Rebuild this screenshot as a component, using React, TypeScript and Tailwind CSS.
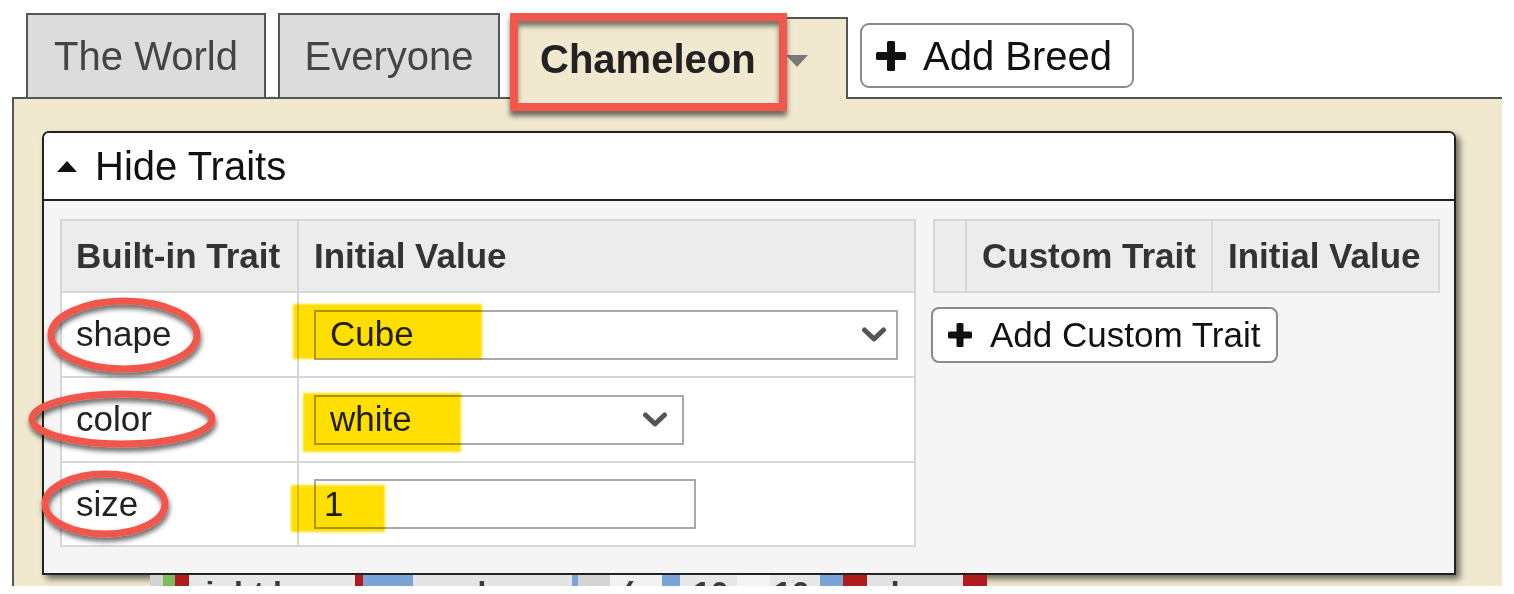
import React from "react";

function Plus({ size, bar }: { size: number; bar: number }) {
  const o = (size - bar) / 2;
  return (
    <svg width={size} height={size} viewBox={`0 0 ${size} ${size}`} className="shrink-0">
      <rect x={o} y={0} width={bar} height={size} rx={1.5} fill="#111" />
      <rect x={0} y={o} width={size} height={bar} rx={1.5} fill="#111" />
    </svg>
  );
}

function Chevron() {
  return (
    <svg width="26" height="18" viewBox="0 0 26 18" className="shrink-0">
      <polyline
        points="3.5,4 13,13 22.5,4"
        fill="none"
        stroke="#555"
        strokeWidth="5"
        strokeLinecap="round"
        strokeLinejoin="round"
      />
    </svg>
  );
}

const strip: { w: number; bg: string; t?: string }[] = [
  { w: 13, bg: "#d2d2d2" },
  { w: 12, bg: "#7dbb5e" },
  { w: 14, bg: "#b01c1c" },
  { w: 166, bg: "#e8e8e8", t: "right by" },
  { w: 8, bg: "#b01c1c" },
  { w: 50, bg: "#7aa3d6" },
  { w: 159, bg: "#e4e4e4", t: "random" },
  { w: 6, bg: "#7aa3d6" },
  { w: 32, bg: "#d4d4d4" },
  { w: 52, bg: "#f2f2f2", t: " (" },
  { w: 18, bg: "#7aa3d6" },
  { w: 57, bg: "#e8e8e8", t: " 10" },
  { w: 33, bg: "#f4f4f4" },
  { w: 50, bg: "#e8e8e8", t: "10" },
  { w: 23, bg: "#7aa3d6" },
  { w: 24, bg: "#b01c1c" },
  { w: 96, bg: "#e2e2e2", t: " done" },
  { w: 24, bg: "#b01c1c" },
];

export default function App() {
  return (
    <div className="relative w-[1514px] h-[594px] overflow-hidden bg-white font-['Liberation_Sans',Arial,sans-serif] text-[#222]">
      {/* Tabs row */}
      <div className="flex items-end h-[97px] pl-[26px]">
        <div className="h-[84px] w-[240px] flex items-center justify-center bg-[#dcdcdc] border-2 border-b-0 border-[#555] text-[40px] text-[#444]">
          The World
        </div>
        <div className="ml-[12px] h-[84px] w-[222px] flex items-center justify-center bg-[#dcdcdc] border-2 border-b-0 border-[#555] text-[40px] text-[#444]">
          Everyone
        </div>
        <div className="relative z-10 ml-[12px] mb-[-2px] h-[82px] w-[336px] flex items-center bg-[#f0e9cf] border-2 border-b-0 border-[#555] pl-[26px]">
          <span className="text-[40px] font-bold text-[#222]">Chameleon</span>
          <svg width="22" height="12" viewBox="0 0 22 12" className="ml-[30px] mt-[4px]">
            <polygon points="0,0 22,0 11,12" fill="#7a7a7a" />
          </svg>
        </div>
        <button className="ml-[12px] mb-[9px] h-[65px] w-[274px] flex items-center pl-[14px] bg-white border-2 border-[#8a8a8a] rounded-[9px]">
          <Plus size={30} bar={8} />
          <span className="ml-[17px] text-[40px] text-[#111]">Add Breed</span>
        </button>
      </div>

      {/* Panel */}
      <div className="ml-[12px] w-[1490px] h-[489px] border-t-2 border-l-2 border-[#555] bg-[#f0e9cf] pt-[32px] pl-[28px]">
        <div className="w-[1414px] h-[444px] border-2 border-[#222] rounded-t-[7px] bg-[#f5f5f5] shadow-[4px_4px_6px_rgba(0,0,0,0.55)] flex flex-col">
          <div className="h-[68px] shrink-0 border-b-2 border-[#222] bg-white rounded-t-[5px] flex items-center pl-[13px]">
            <svg width="20" height="11" viewBox="0 0 20 11">
              <polygon points="10,0 20,11 0,11" fill="#111" />
            </svg>
            <span className="ml-[18px] text-[40px] text-[#111]">Hide Traits</span>
          </div>
          <div className="flex items-start pt-[18px] pl-[16px]">
            {/* Built-in table */}
            <div className="w-[856px] border-2 border-[#d6d6d6] bg-white">
              <div className="h-[72px] flex border-b-2 border-[#d6d6d6] bg-[#ececec] text-[35px] font-bold text-[#333]">
                <div className="w-[237px] border-r-2 border-[#d6d6d6] flex items-center pl-[14px]">Built-in Trait</div>
                <div className="flex-1 flex items-center pl-[15px]">Initial Value</div>
              </div>
              <div className="h-[85px] flex border-b-2 border-[#d6d6d6] text-[35px]">
                <div className="w-[237px] border-r-2 border-[#d6d6d6] flex items-center pl-[14px]">shape</div>
                <div className="flex-1 flex items-center pl-[15px]">
                  <div className="w-[584px] h-[50px] border-2 border-[#a9a9a9] bg-white flex items-center justify-between pl-[14px] pr-[9px]">
                    <span>Cube</span>
                    <Chevron />
                  </div>
                </div>
              </div>
              <div className="h-[85px] flex border-b-2 border-[#d6d6d6] text-[35px]">
                <div className="w-[237px] border-r-2 border-[#d6d6d6] flex items-center pl-[14px]">color</div>
                <div className="flex-1 flex items-center pl-[15px]">
                  <div className="w-[370px] h-[50px] border-2 border-[#a9a9a9] bg-white flex items-center justify-between pl-[14px] pr-[14px]">
                    <span>white</span>
                    <Chevron />
                  </div>
                </div>
              </div>
              <div className="h-[82px] flex text-[35px]">
                <div className="w-[237px] border-r-2 border-[#d6d6d6] flex items-center pl-[14px]">size</div>
                <div className="flex-1 flex items-center pl-[15px]">
                  <div className="w-[382px] h-[50px] border-2 border-[#a9a9a9] bg-white flex items-center pl-[8px]">
                    <span>1</span>
                  </div>
                </div>
              </div>
            </div>

            {/* Custom table */}
            <div className="ml-[17px] flex flex-col">
              <div className="w-[507px] h-[74px] border-2 border-[#d6d6d6] bg-[#ececec] flex text-[35px] font-bold text-[#333]">
                <div className="w-[32px] border-r-2 border-[#d6d6d6]" />
                <div className="w-[246px] border-r-2 border-[#d6d6d6] flex items-center pl-[15px]">Custom Trait</div>
                <div className="flex-1 flex items-center pl-[15px]">Initial Value</div>
              </div>
              <button className="mt-[14px] ml-[-2px] w-[347px] h-[56px] flex items-center pl-[15px] bg-white border-2 border-[#8a8a8a] rounded-[8px]">
                <Plus size={24} bar={7} />
                <span className="ml-[18px] text-[35px] text-[#111]">Add Custom Trait</span>
              </button>
            </div>
          </div>
        </div>

        {/* clipped blocks strip below */}
        <div className="ml-[108px] h-[11px] overflow-hidden flex">
          {strip.map((s, i) => (
            <div
              key={i}
              className="h-[11px] overflow-hidden shrink-0 whitespace-pre"
              style={{ width: s.w, background: s.bg }}
            >
              {s.t ? (
                <span className="block text-[32px] leading-none font-bold text-[#3a3a3a] mt-[2px] pl-[4px]">{s.t}</span>
              ) : null}
            </div>
          ))}
        </div>
      </div>

      {/* Annotation: red box on active tab */}
      <div className="absolute left-[510px] top-[13px] w-[277px] h-[98px] border-[8px] border-[#f2574b] shadow-[0_5px_5px_rgba(0,0,0,0.55),inset_0_5px_5px_rgba(0,0,0,0.5)] pointer-events-none z-20" />

      {/* Annotation: yellow highlights */}
      <div className="absolute left-[293px] top-[304px] w-[189px] h-[55px] bg-[#ffdf00] mix-blend-multiply blur-[1px] pointer-events-none z-20" />
      <div className="absolute left-[303px] top-[393px] w-[158px] h-[59px] bg-[#ffdf00] mix-blend-multiply blur-[1px] pointer-events-none z-20" />
      <div className="absolute left-[291px] top-[485px] w-[94px] h-[47px] bg-[#ffdf00] mix-blend-multiply blur-[1px] pointer-events-none z-20" />

      {/* Annotation: red ellipses */}
      <svg className="absolute left-0 top-0 pointer-events-none z-20" width="1514" height="594" viewBox="0 0 1514 594">
        <defs>
          <filter id="sh" x="-20%" y="-40%" width="140%" height="180%">
            <feDropShadow dx="1" dy="4" stdDeviation="2.5" floodColor="#000" floodOpacity="0.6" />
          </filter>
        </defs>
        <g fill="none" stroke="#f2574b" strokeWidth="7" filter="url(#sh)">
          <ellipse cx="124" cy="335" rx="73" ry="34" />
          <ellipse cx="122" cy="419" rx="90" ry="25" />
          <ellipse cx="105" cy="504" rx="60" ry="30" />
        </g>
      </svg>
    </div>
  );
}
